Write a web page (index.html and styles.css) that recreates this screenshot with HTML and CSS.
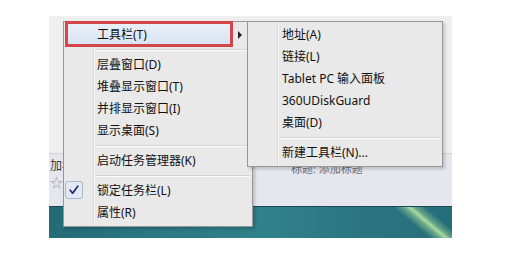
FILE: index.html
```html
<!DOCTYPE html>
<html lang="zh-CN">
<head>
<meta charset="utf-8">
<link rel="stylesheet" href="styles.css">
</head>
<body>
<div class="shot">
  <div class="win"></div>
  <div class="band">
    <div class="band-left">
      <div class="tab-text">加标题</div>
      <div class="star">☆</div>
    </div>
    <div class="band-mid">5</div>
    <div class="band-right">标题: 添加标题</div>
  </div>
  <div class="desk"></div>

  <div class="menu main-menu">
    <div class="item hot"><span class="label">工具栏(T)</span><span class="arrow"></span></div>
    <div class="sep"></div>
    <div class="item"><span class="label">层叠窗口(D)</span></div>
    <div class="item"><span class="label">堆叠显示窗口(T)</span></div>
    <div class="item"><span class="label">并排显示窗口(I)</span></div>
    <div class="item"><span class="label">显示桌面(S)</span></div>
    <div class="sep"></div>
    <div class="item"><span class="label">启动任务管理器(K)</span></div>
    <div class="sep"></div>
    <div class="item checked">
      <span class="checkbox"><svg width="10" height="10" viewBox="0 0 10 10"><path d="M1.2 5.2 L3.6 8.2 L8.8 1.2" fill="none" stroke="#1f2a6b" stroke-width="1.7" stroke-linecap="round" stroke-linejoin="round"/></svg></span>
      <span class="label">锁定任务栏(L)</span>
    </div>
    <div class="item"><span class="label">属性(R)</span></div>
  </div>

  <div class="menu sub-menu">
    <div class="item"><span class="label">地址(A)</span></div>
    <div class="item"><span class="label">链接(L)</span></div>
    <div class="item"><span class="label">Tablet PC 输入面板</span></div>
    <div class="item"><span class="label">360UDiskGuard</span></div>
    <div class="item"><span class="label">桌面(D)</span></div>
    <div class="sep"></div>
    <div class="item"><span class="label">新建工具栏(N)...</span></div>
  </div>

  <div class="redbox"></div>
</div>
</body>
</html>
```
FILE: styles.css
```css
html, body {
  margin: 0;
  padding: 0;
  background: #ffffff;
}
body {
  font-family: "Noto Sans", "Noto Sans CJK SC", sans-serif;
  font-size: 12px;
  color: #111111;
}
.shot {
  position: relative;
  margin: 16px 0 0 49px;
  width: 403px;
  height: 222px;
  overflow: hidden;
  display: flex;
  flex-direction: column;
  background: #efefef;
}
.win {
  height: 137px;
  background: #efefef;
}
.band {
  height: 52px;
  border-top: 1px solid #d2d3d6;
  background: #e5e6ee;
  display: flex;
  color: #3a3a3a;
}
.band-left {
  width: 157px;
  display: flex;
  flex-direction: column;
}
.tab-text {
  margin: 5px 0 0 1px;
  line-height: 13px;
  font-size: 12px;
  white-space: nowrap;
}
.star {
  margin: 3px 0 0 1px;
  font-size: 13px;
  line-height: 15px;
  color: #a0a0a0;
}
.band-mid {
  width: 85px;
  padding-top: 9px;
  font-size: 11px;
  line-height: 12px;
  color: #555;
}
.band-right {
  padding-top: 9px;
  font-size: 11px;
  line-height: 12px;
  color: #6b6f78;
  white-space: nowrap;
}
.desk {
  flex: 1;
  border-top: 1px solid #1d4a52;
  background:
    linear-gradient(40deg, transparent 86.5%, rgba(160, 215, 150, 0.55) 89%, rgba(185, 230, 160, 0.9) 90.3%, rgba(160, 215, 150, 0.5) 91.5%, transparent 94%),
    linear-gradient(90deg, #236a76 0%, #2b7a86 30%, #2f818c 55%, #2a7480 80%, #256d79 100%);
}

.menu {
  position: absolute;
  box-sizing: border-box;
  border: 1px solid #979797;
  padding: 2px 0;
  background:
    linear-gradient(to right, transparent 29px, #d9d9d9 29px, #d9d9d9 30px, #f8f8f8 30px, #f8f8f8 31px, transparent 31px),
    #e9e9e9;
  box-shadow: 2px 2px 3px rgba(0, 0, 0, 0.18);
  display: flex;
  flex-direction: column;
}
.main-menu {
  left: 14px;
  top: 5px;
  width: 190px;
  height: 206px;
}
.sub-menu {
  left: 198px;
  top: 5px;
  width: 196px;
  height: 146px;
}
.item {
  height: 22px;
  display: flex;
  align-items: center;
  position: relative;
  white-space: nowrap;
}
.label {
  padding-left: 33px;
  line-height: 22px;
}
.sub-menu .label {
  padding-left: 34px;
}
.item.hot {
  background: linear-gradient(#e9eff8, #d8e3f1) no-repeat 3px 0 / 164px 100%;
}
.arrow {
  margin-left: auto;
  margin-right: 10px;
  width: 0;
  height: 0;
  border-left: 4px solid #202020;
  border-top: 4px solid transparent;
  border-bottom: 4px solid transparent;
}
.sep {
  height: 8px;
  margin: 0 2px 0 31px;
  background: linear-gradient(transparent 3px, #d3d3d3 3px, #d3d3d3 4px, #fbfbfb 4px, #fbfbfb 5px, transparent 5px);
}
.checkbox {
  position: absolute;
  left: 1px;
  top: 1px;
  width: 18px;
  height: 18px;
  box-sizing: border-box;
  border: 1px solid #aab7cf;
  border-radius: 3px;
  background: #e3e9f3;
  display: flex;
  align-items: center;
  justify-content: center;
}
.redbox {
  position: absolute;
  left: 16px;
  top: 5px;
  width: 168px;
  height: 26px;
  box-sizing: border-box;
  border: 3px solid #d4464c;
}
```
